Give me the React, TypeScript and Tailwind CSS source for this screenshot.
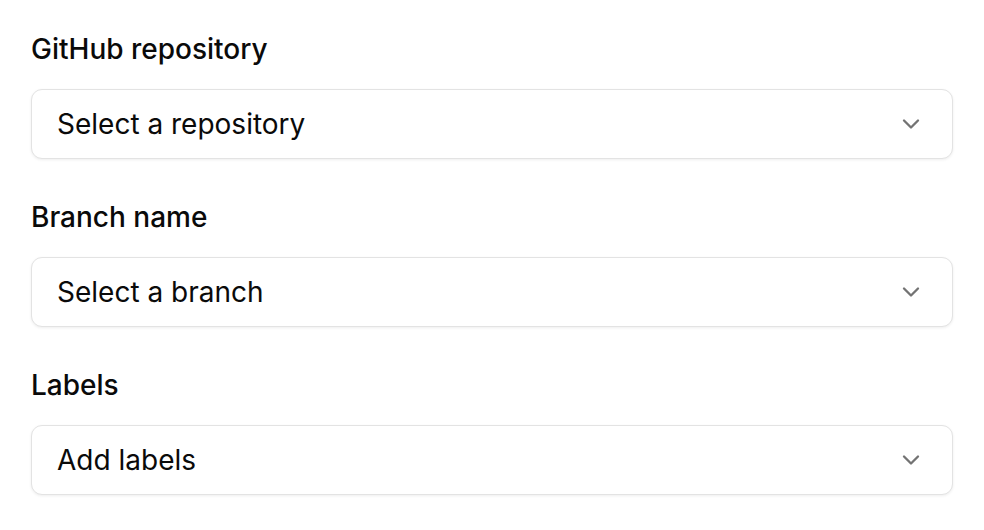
import React from "react";

function Chevron() {
  return (
    <svg width="28" height="28" viewBox="0 0 24 24" fill="none" stroke="#737373" strokeWidth="2" strokeLinecap="round" strokeLinejoin="round">
      <path d="m6 9 6 6 6-6" />
    </svg>
  );
}

function Field({ label, placeholder }: { label: string; placeholder: string }) {
  return (
    <div className="flex flex-col gap-[20px]">
      <div className="text-[28px] leading-[40px] font-medium text-[#0a0a0a]">{label}</div>
      <div className="flex h-[70px] items-center justify-between rounded-[11px] border border-[#e3e3e3] bg-white pl-[25px] pr-[27px] shadow-[0_1px_3px_rgba(0,0,0,0.07)]">
        <span className="text-[28px] text-[#0a0a0a]">{placeholder}</span>
        <Chevron />
      </div>
    </div>
  );
}

export default function App() {
  return (
    <div className="min-h-[530px] w-[984px] bg-white px-[31px] pt-[29px]" style={{ fontFamily: "Inter, 'Noto Sans', sans-serif" }}>
      <div className="flex flex-col gap-[38px]">
        <Field label="GitHub repository" placeholder="Select a repository" />
        <Field label="Branch name" placeholder="Select a branch" />
        <Field label="Labels" placeholder="Add labels" />
      </div>
    </div>
  );
}
